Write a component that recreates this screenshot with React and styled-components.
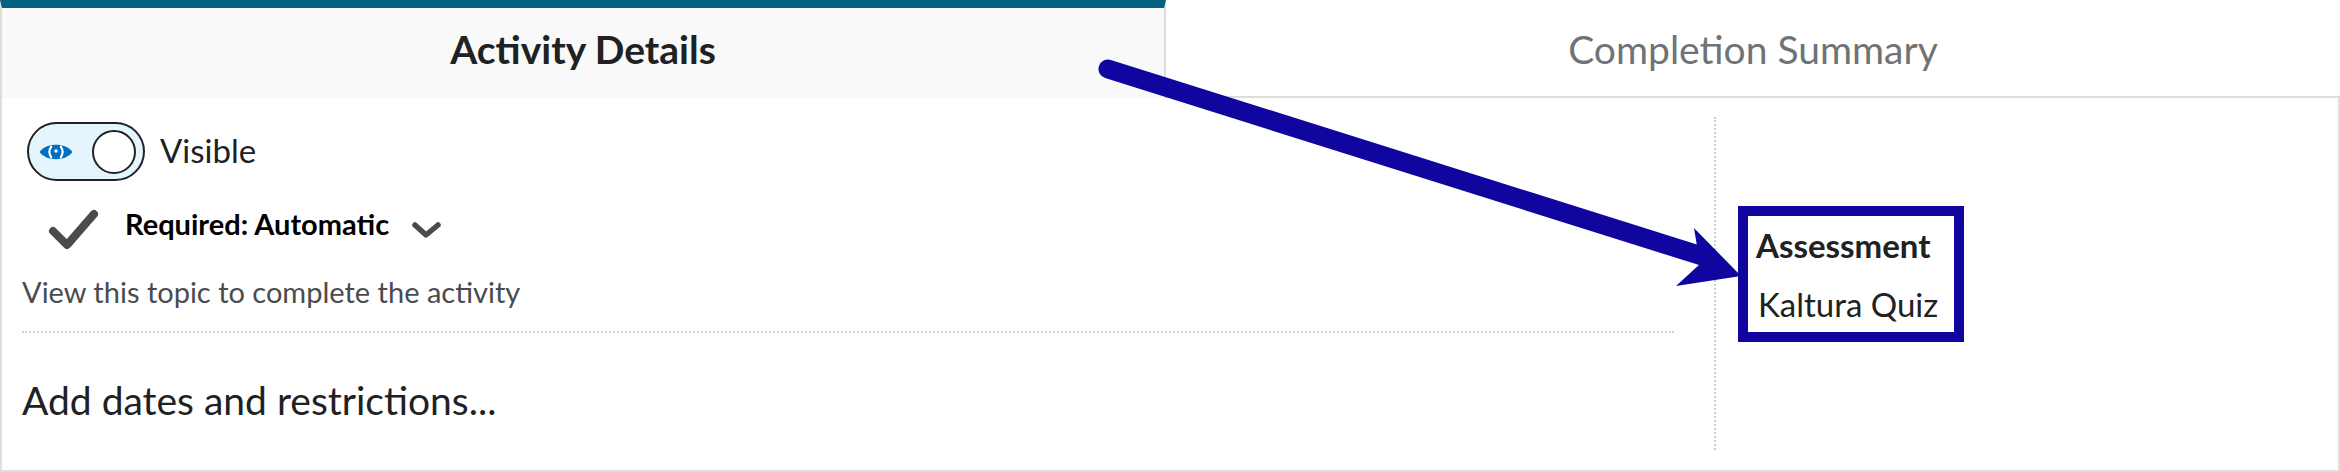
import React from "react";
import styled, { createGlobalStyle } from "styled-components";

const Global = createGlobalStyle`
  html, body { margin: 0; padding: 0; background: #ffffff; }
  body { font-family: Lato, "Noto Sans", Arial, sans-serif; color: #202122; }
  * { box-sizing: border-box; }
`;

const Frame = styled.div`
  position: relative;
  width: 2340px;
  height: 472px;
  display: flex;
  flex-direction: column;
  overflow: hidden;
`;

const TabRow = styled.div`
  display: flex;
  height: 98px;
`;

const Tab = styled.div`
  display: flex;
  align-items: center;
  justify-content: center;
  height: 98px;
  font-size: 39px;
  line-height: 46px;
  ${(p) =>
    p.$active
      ? `
    width: 1166px;
    background: #f9f9f9;
    border-top: 8px solid #02627f;
    border-left: 2px solid #dddddd;
    border-right: 2px solid #dddddd;
    color: #202122;
    font-weight: 700;
    padding-bottom: 8px;
  `
      : `
    flex: 1;
    background: #ffffff;
    border-bottom: 2px solid #dddddd;
    color: #6e7376;
    font-weight: 400;
    padding-top: 1px;
  `}
`;

const Panel = styled.div`
  flex: 1;
  display: flex;
  border-left: 2px solid #dddddd;
  border-right: 2px solid #dddddd;
  border-bottom: 2px solid #dddddd;
`;

const LeftCol = styled.div`
  width: 1712px;
  display: flex;
  flex-direction: column;
`;

const Divider = styled.div`
  width: 0;
  border-left: 2px dotted #cccccc;
  margin: 19px 0 20px;
`;

const RightCol = styled.div`
  flex: 1;
  display: flex;
  flex-direction: column;
  align-items: flex-start;
  padding: 108px 0 0 22px;
`;

const ToggleRow = styled.div`
  display: flex;
  align-items: center;
  margin-top: 24px;
  padding-left: 25px;
`;

const Toggle = styled.div`
  width: 118px;
  height: 59px;
  border: 2px solid #202122;
  border-radius: 30px;
  background: #e4f5fe;
  display: flex;
  align-items: center;
  justify-content: space-between;
  padding: 0 7px 0 10px;
`;

const Knob = styled.div`
  width: 44px;
  height: 44px;
  border-radius: 50%;
  border: 2px solid #202122;
  background: #ffffff;
`;

const ToggleLabel = styled.span`
  margin: 0 0 3px 15px;
  font-size: 33px;
  line-height: 40px;
  color: #202122;
`;

const RequiredRow = styled.div`
  display: flex;
  align-items: center;
  height: 44px;
  margin-top: 27px;
  padding-left: 44px;
`;

const RequiredText = styled.span`
  margin: 0 20px 12px 23px;
  font-size: 29px;
  line-height: 34px;
  font-weight: 700;
  color: #000000;
`;

const Description = styled.div`
  margin-top: 23px;
  padding-left: 20px;
  font-size: 29px;
  line-height: 34px;
  color: #494c4e;
`;

const DottedRule = styled.div`
  margin: 22px 40px 0 20px;
  border-top: 2px dotted #cdd5dc;
`;

const AddDates = styled.div`
  margin-top: 44px;
  padding-left: 20px;
  font-size: 39px;
  line-height: 46px;
  color: #202122;
`;

const Callout = styled.div`
  border: 10px solid #10069f;
  padding: 11px 16px 10px 8px;
  display: flex;
  flex-direction: column;
  gap: 23px;
`;

const CalloutTitle = styled.div`
  font-size: 33px;
  line-height: 36px;
  font-weight: 700;
  color: #202122;
`;

const CalloutValue = styled.div`
  font-size: 33px;
  line-height: 36px;
  color: #202122;
  padding-left: 2px;
`;

const Overlay = styled.svg`
  position: absolute;
  left: 0;
  top: 0;
  pointer-events: none;
`;

const EyeIcon = () => (
  <svg width="34" height="20" viewBox="0 0 32 18">
    <path d="M0.5 9 C7 0 25 0 31.5 9 C25 18 7 18 0.5 9 Z" fill="#006fbf" />
    <path d="M11.5 4 Q8 9 11.5 14" stroke="#ffffff" strokeWidth="2" fill="none" strokeLinecap="round" />
    <path d="M20.5 4 Q24 9 20.5 14" stroke="#ffffff" strokeWidth="2" fill="none" strokeLinecap="round" />
    <circle cx="16" cy="8" r="1.6" fill="#ffffff" />
  </svg>
);

const CheckIcon = () => (
  <svg width="56" height="44" viewBox="0 0 56 44">
    <polyline
      points="7,23 21,37 48,6"
      fill="none"
      stroke="#494c4e"
      strokeWidth="8"
      strokeLinecap="round"
      strokeLinejoin="round"
    />
  </svg>
);

const ChevronIcon = () => (
  <svg width="36" height="24" viewBox="0 0 36 24">
    <polyline
      points="6,7 17,17 29,7"
      fill="none"
      stroke="#494c4e"
      strokeWidth="5.5"
      strokeLinecap="round"
      strokeLinejoin="round"
    />
  </svg>
);

export default function App() {
  return (
    <>
      <Global />
      <Frame>
        <TabRow>
          <Tab $active>Activity Details</Tab>
          <Tab>Completion Summary</Tab>
        </TabRow>
        <Panel>
          <LeftCol>
            <ToggleRow>
              <Toggle>
                <EyeIcon />
                <Knob />
              </Toggle>
              <ToggleLabel>Visible</ToggleLabel>
            </ToggleRow>
            <RequiredRow>
              <CheckIcon />
              <RequiredText>Required: Automatic</RequiredText>
              <ChevronIcon />
            </RequiredRow>
            <Description>View this topic to complete the activity</Description>
            <DottedRule />
            <AddDates>Add dates and restrictions...</AddDates>
          </LeftCol>
          <Divider />
          <RightCol>
            <Callout>
              <CalloutTitle>Assessment</CalloutTitle>
              <CalloutValue>Kaltura Quiz</CalloutValue>
            </Callout>
          </RightCol>
        </Panel>
        <Overlay width="2340" height="472" viewBox="0 0 2340 472">
          <line x1="1108" y1="69" x2="1702" y2="256" stroke="#10069f" strokeWidth="19" strokeLinecap="round" />
          <polygon points="1694,228 1741,276 1676,286 1700,264" fill="#10069f" />
        </Overlay>
      </Frame>
    </>
  );
}
